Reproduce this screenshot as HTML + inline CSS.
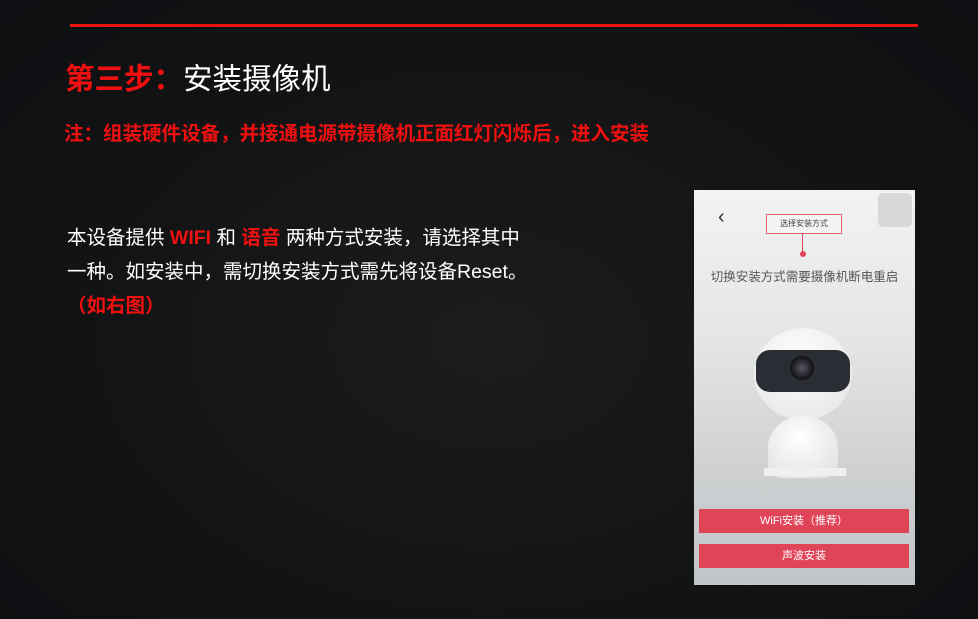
<!DOCTYPE html>
<html><head><meta charset="utf-8"><style>
html,body{margin:0;padding:0}
body{width:978px;height:619px;overflow:hidden;position:relative;background:radial-gradient(ellipse at 50% 55%,#1c1c1d 0%,#121314 60%,#0d0f12 100%);font-family:"Liberation Sans","Noto Sans CJK SC",sans-serif;}
.line{position:absolute;left:70px;top:24px;width:848px;height:3px;background:#e8120e}
.t{position:absolute;left:65px;top:61px;font-size:29.5px;color:#fff;line-height:38px;white-space:nowrap}
.t b{color:#f01010}
.n{position:absolute;left:64px;top:122px;font-size:19.5px;color:#f01010;font-weight:bold;line-height:24px;white-space:nowrap}
.b{position:absolute;left:67px;top:221px;font-size:19.5px;color:#fff;line-height:34px;width:470px}
.b .r{color:#f01010;font-weight:bold}
.ph{position:absolute;left:694px;top:190px;width:221px;height:395px;background:linear-gradient(180deg,#f2f3f3 0%,#e3e4e4 40%,#cfd1d2 70%,#bfc5c8 100%);overflow:hidden}
.btn{position:absolute;left:5px;width:210px;height:24px;background:#e04458;color:#fff;font-size:11px;text-align:center;line-height:24px}
</style></head><body>
<div class="line"></div>
<div class="t"><b>第三步：</b>安装摄像机</div>
<div class="n">注：组装硬件设备，并接通电源带摄像机正面红灯闪烁后，进入安装</div>
<div class="b">本设备提供 <span class="r">WIFI</span> 和 <span class="r">语音</span> 两种方式安装，请选择其中<br>一种。如安装中，需切换安装方式需先将设备Reset。<br><span class="r">（如右图）</span></div>
<div class="ph">
 <div style="position:absolute;left:24px;top:16px;font-size:20px;color:#333">‹</div>
 <div style="position:absolute;left:184px;top:3px;width:34px;height:34px;background:#d8d8d8;border-radius:5px"></div>
 <div style="position:absolute;left:72px;top:24px;width:74px;height:18px;border:1px solid #e06070;font-size:8px;color:#444;text-align:center;line-height:18px;background:#f4f4f4">选择安装方式</div>
 <div style="position:absolute;left:108px;top:43px;width:1px;height:20px;background:#e04458"></div>
 <div style="position:absolute;left:106px;top:61px;width:6px;height:6px;border-radius:50%;background:#e04458"></div>
 <div style="position:absolute;left:0;top:76px;width:221px;text-align:center;font-size:12.5px;color:#555">切换安装方式需要摄像机断电重启</div>
 <div style="position:absolute;left:60px;top:138px;width:98px;height:92px;border-radius:50%;background:radial-gradient(circle at 45% 35%,#fff,#e2e2e2)"></div>
 <div style="position:absolute;left:62px;top:160px;width:94px;height:42px;border-radius:14px;background:#2a2d33"></div>
 <div style="position:absolute;left:96px;top:166px;width:24px;height:24px;border-radius:50%;background:radial-gradient(circle,#556 0,#111 70%)"></div>
 <div style="position:absolute;left:74px;top:226px;width:70px;height:62px;border-radius:50% 50% 20% 20%;background:radial-gradient(circle at 45% 35%,#fff,#dedede)"></div>
 <div style="position:absolute;left:70px;top:278px;width:82px;height:8px;background:#f0f0f0"></div>
 <div class="btn" style="top:319px">WiFi安装（推荐）</div>
 <div class="btn" style="top:354px">声波安装</div>
</div>
</body></html>
